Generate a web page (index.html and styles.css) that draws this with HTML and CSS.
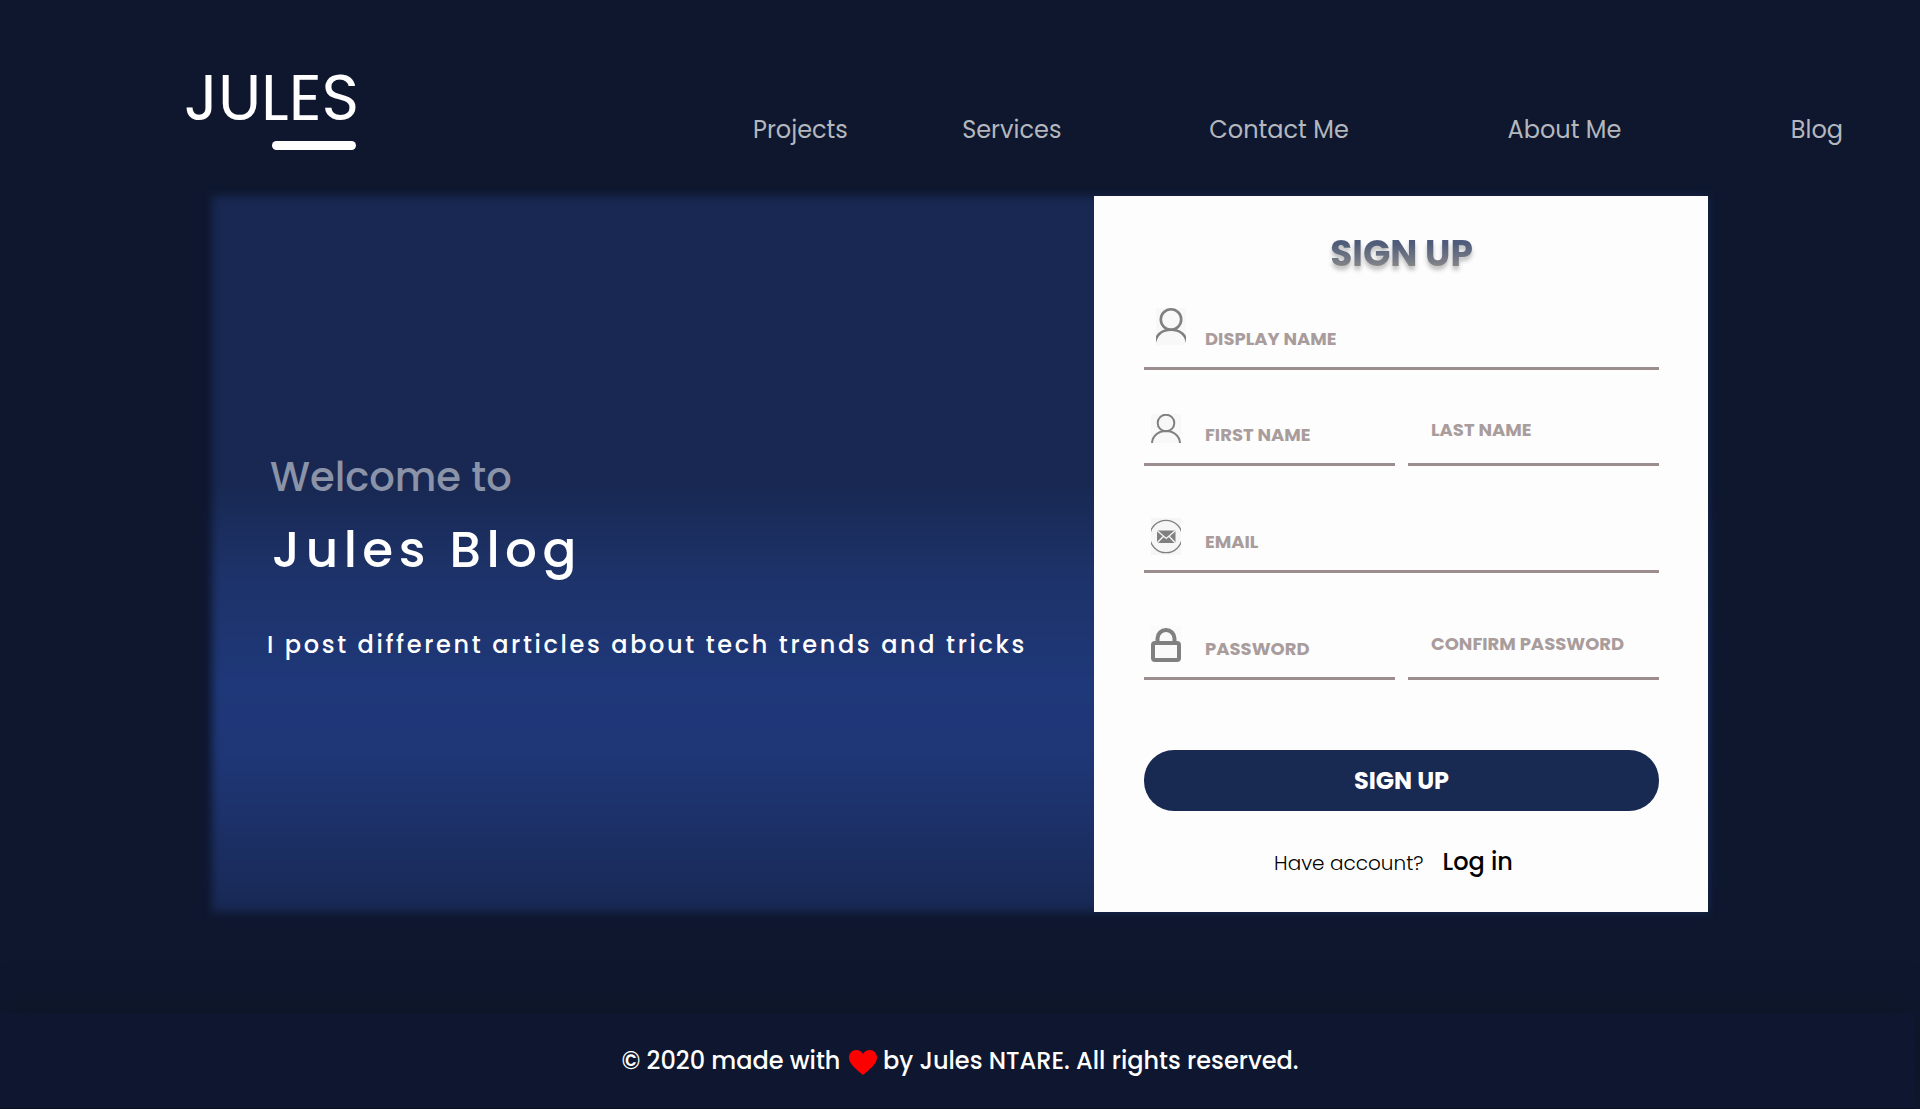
FILE: index.html
```
<!DOCTYPE html>
<html lang="en">
<head>
<meta charset="utf-8">
<title>Jules Blog - Sign up</title>
<link rel="stylesheet" href="styles.css">
</head>
<body>
<header class="header">
  <a class="logo" href="#">JULES</a>
  <nav class="nav" aria-label="Main">
    <a href="#">Projects</a>
    <a href="#">Services</a>
    <a href="#">Contact Me</a>
    <a href="#">About Me</a>
    <a href="#">Blog</a>
  </nav>
</header>

<main class="card">
  <section class="intro">
    <p class="intro-lead">Welcome to</p>
    <h1 class="intro-title">Jules Blog</h1>
    <p class="intro-text">I post different articles about tech trends and tricks</p>
  </section>

  <form class="form">
    <h2 class="form-title">SIGN UP</h2>

    <div class="row">
      <div class="field">
        <svg class="icon icon-inset" width="30" height="37" viewBox="0 0 30 37" fill="none" stroke="#808080" stroke-width="2.600" aria-hidden="true">
          <rect width="30" height="37" fill="#f8f8f8" stroke="none"/>
          <circle cx="15" cy="11.500" r="10.200"/>
          <path d="M-1 34C1 26 7 21.700 15 21.700S29 26 31 34"/>
        </svg>
        <input type="text" aria-label="Display name" placeholder="DISPLAY NAME">
      </div>
    </div>

    <div class="row row-split">
      <div class="field">
        <svg class="icon" width="30" height="29" viewBox="0 0 30 29" fill="none" stroke="#808080" stroke-width="2" aria-hidden="true">
          <rect width="30" height="29" fill="#f8f8f8" stroke="none"/>
          <circle cx="15" cy="9" r="8.300"/>
          <path d="M1 29C1.500 21.500 7.500 17 15 17S28.500 21.500 29 29"/>
        </svg>
        <input type="text" aria-label="First name" placeholder="FIRST NAME">
      </div>
      <div class="field field-plain">
        <input type="text" aria-label="Last name" placeholder="LAST NAME">
      </div>
    </div>

    <div class="row row-spaced">
      <div class="field">
        <svg class="icon icon-low" width="30" height="37" viewBox="0 0 30 37" fill="none" aria-hidden="true">
          <rect width="30" height="37" fill="#f6f6f6"/>
          <circle cx="15" cy="18.500" r="16.200" stroke="#808080" stroke-width="1.300"/>
          <rect x="6" y="12.500" width="18.500" height="12.500" fill="#808080"/>
          <path d="M6 12.500L15.200 20.500L24.500 12.500M6 25L12.500 18.300M24.500 25L18 18.300" stroke="#f6f6f6" stroke-width="1.300"/>
        </svg>
        <input type="email" aria-label="Email" placeholder="EMAIL">
      </div>
    </div>

    <div class="row row-split row-spaced">
      <div class="field">
        <svg class="icon icon-low" width="30" height="36" viewBox="0 0 30 36" fill="none" stroke="#808080" aria-hidden="true">
          <rect width="30" height="36" fill="#fafafa" stroke="none"/>
          <path d="M6.500 17V12.500A8.500 8.500 0 0 1 23.500 12.500V17" stroke-width="4"/>
          <rect x="2" y="17" width="26" height="17" rx="2" stroke-width="4"/>
        </svg>
        <input type="password" aria-label="Password" placeholder="PASSWORD">
      </div>
      <div class="field field-plain">
        <input type="password" aria-label="Confirm password" placeholder="CONFIRM PASSWORD">
      </div>
    </div>

    <button class="submit" type="submit">SIGN UP</button>
    <p class="account">Have account? <a href="#">Log in</a></p>
  </form>
</main>

<footer class="footer">
  <p>© 2020 made with
    <svg width="28" height="25" viewBox="0 0 28 25" role="img" aria-label="love"><path fill="#f00" d="M14 25C7 19 0 14 0 7.500C0 3 3.500 0 7 0C10 0 12.500 1.500 14 4C15.500 1.500 18 0 21 0C24.500 0 28 3 28 7.500C28 14 21 19 14 25Z"/></svg>
    by Jules NTARE. All rights reserved.</p>
</footer>
</body>
</html>
```

FILE: styles.css
```
* {
  box-sizing: border-box;
}

body {
  margin: 0;
  min-height: 100vh;
  display: flex;
  flex-direction: column;
  background: #0e172e;
  color: #fff;
  font-family: Poppins, Inter, sans-serif;
}

h1,
h2,
p {
  margin: 0;
}

a {
  color: inherit;
  text-decoration: none;
}

/* Header */

.header {
  display: flex;
  justify-content: space-between;
  padding: 63px 77px 46px 184px;
}

.logo {
  display: flex;
  flex-direction: column;
  font: 400 64px/70px Poppins, Lato, sans-serif;
}

.logo::after {
  content: "";
  width: 84px;
  height: 9px;
  margin: 8px 3px 0 0;
  border-radius: 5px;
  background: #fff;
  align-self: flex-end;
}

.nav {
  flex: 0 1 1090px;
  display: grid;
  grid-template-columns: 209fr 247fr 298fr 283fr auto;
  padding-top: 52px;
  color: #b4b7be;
  font-size: 24px;
  line-height: 30px;
  font-weight: 400;
}

/* Card */

.card {
  position: relative;
  display: grid;
  grid-template-columns: minmax(0, 882fr) minmax(0, 614fr);
  margin: 0 212px;
}

.card::before {
  content: "";
  position: absolute;
  inset: 0;
  z-index: -1;
  background: linear-gradient(#182852 0%, #182852 40%, #1d3268 52%, #1f3879 68%, #1f3777 78%, #1a2b5a 97%, #182852 100%);
  filter: blur(4px);
}

.intro {
  padding: 256px 0 0 55px;
}

.intro-lead {
  padding-left: 3px;
  color: #8b93a8;
  font-size: 40px;
  line-height: 50px;
  font-weight: 500;
}

.intro-title {
  margin-top: 18px;
  padding-left: 5px;
  font-size: 50px;
  line-height: 60px;
  font-weight: 500;
  letter-spacing: 0.11em;
}

.intro-text {
  margin-top: 50px;
  font-size: 24px;
  line-height: 30px;
  font-weight: 500;
  letter-spacing: 0.11em;
}

/* Form */

.form {
  display: flex;
  flex-direction: column;
  padding: 36px 49px 34px 50px;
  background: #fdfdfd;
  color: #000;
}

.form-title {
  align-self: center;
  font: 700 36px/44px Poppins, Lato, sans-serif;
  background: linear-gradient(#4f5b7a 25%, #8a8a8a 85%);
  background-clip: text;
  color: transparent;
  filter: drop-shadow(0 4px 2px rgba(0, 0, 0, 0.25));
}

.row {
  display: grid;
  gap: 13px;
  margin-top: 24px;
}

.form-title + .row {
  margin-top: 22px;
}

.row-split {
  grid-template-columns: repeat(2, minmax(0, 1fr));
}

.row-spaced {
  margin-top: 35px;
}

.field {
  display: flex;
  align-items: flex-end;
  height: 72px;
  padding-left: 7px;
  border-bottom: 3px solid #9c8e8e;
}

.field-plain {
  padding-left: 23px;
}

.icon {
  flex: none;
  margin: 0 24px 20px 0;
}

.icon-inset {
  margin: 0 19px 22px 5px;
}

.icon-low {
  margin-bottom: 15px;
}

.field input {
  flex: 1;
  min-width: 0;
  height: 58px;
  padding: 0;
  border: 0;
  outline: 0;
  background: none;
  color: #333;
  font: 700 18px/24px Poppins, Lato, sans-serif;
}

.field-plain input {
  height: 67px;
}

.field input::placeholder {
  color: #a99c9c;
  opacity: 1;
}

.submit {
  height: 61px;
  margin-top: 70px;
  border: 0;
  border-radius: 30px;
  background: #182952;
  color: #fff;
  font: 700 24px/30px Poppins, Lato, sans-serif;
  cursor: pointer;
}

.account {
  display: flex;
  justify-content: center;
  align-items: baseline;
  gap: 19px;
  margin-top: 36px;
  padding-right: 16px;
  font-size: 20px;
  line-height: 30px;
  font-weight: 300;
}

.account a {
  font-size: 24px;
  font-weight: 500;
}

/* Footer */

.footer {
  margin: auto 5px 0 0;
  padding: 30px 0 30px 5px;
  border-bottom: 1px solid #0a1020;
  background: #0e172f;
  box-shadow: 0 -4px 40px #0e1624;
  text-align: center;
  font-size: 24px;
  line-height: 35px;
  font-weight: 500;
}

.footer svg {
  margin: 0 0 0 2px;
  vertical-align: -6px;
}
```
